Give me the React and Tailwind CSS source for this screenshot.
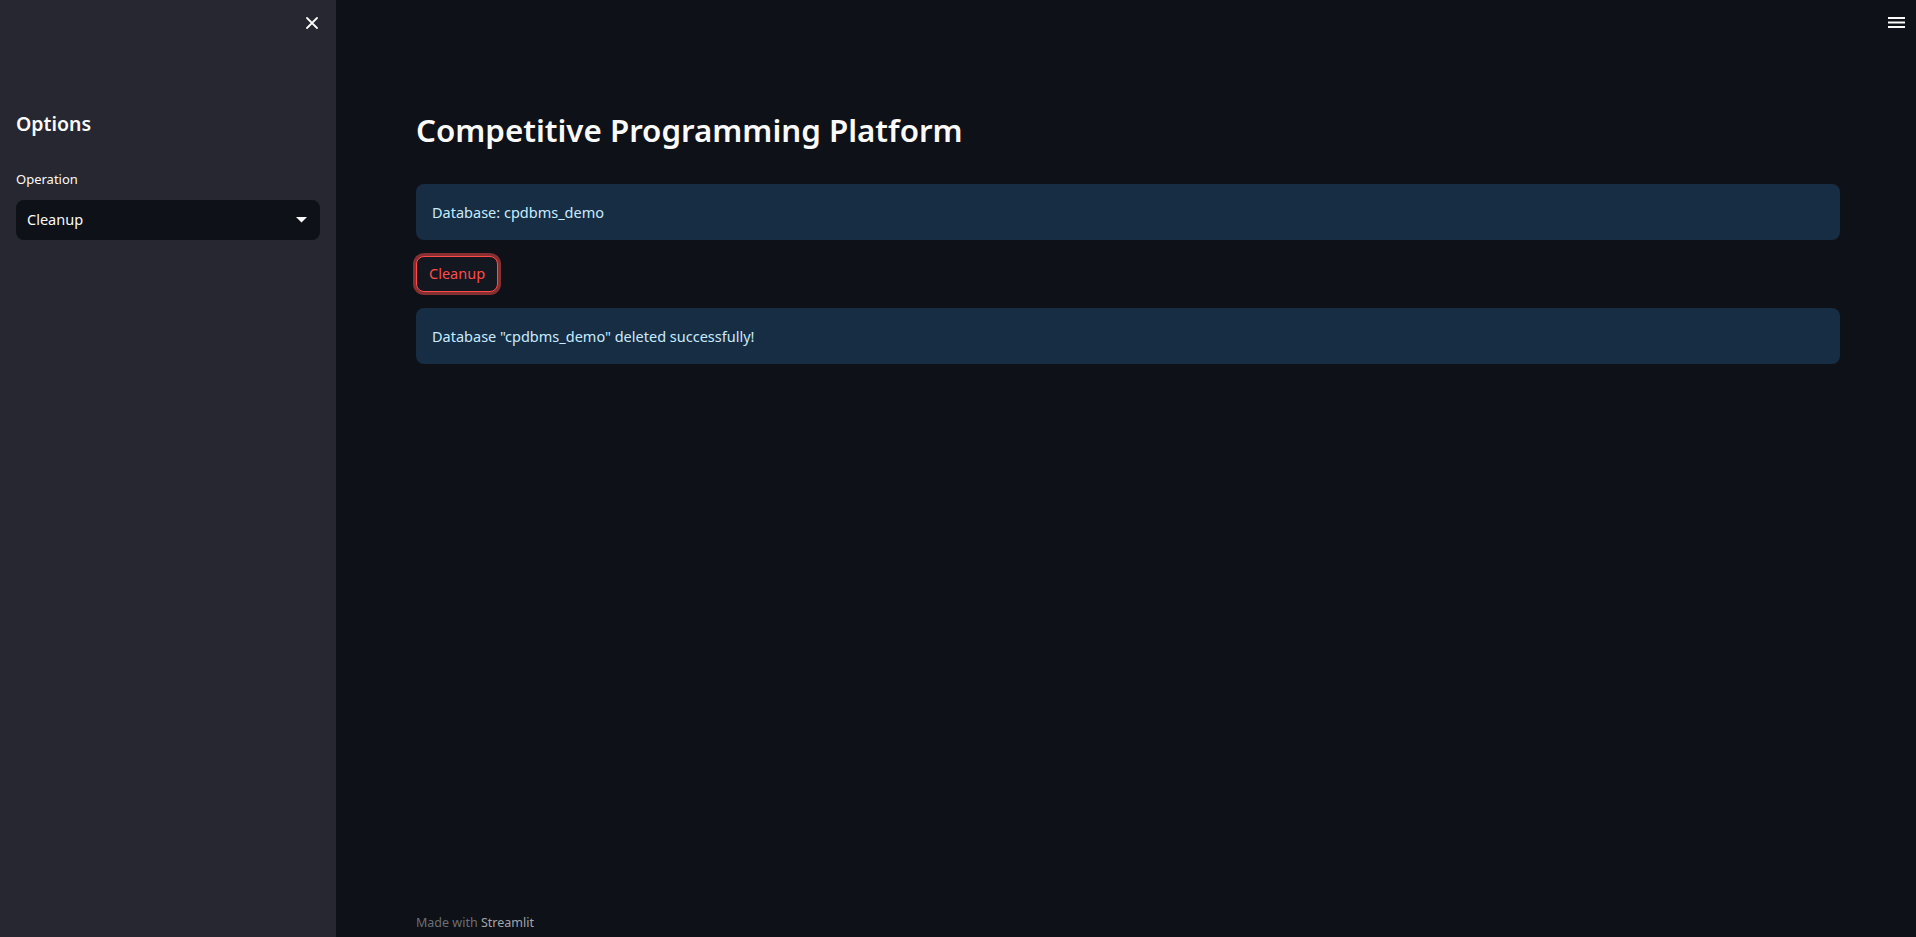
export default function App() {
  return (
    <div className="flex h-screen w-full overflow-hidden bg-[#0e1117] font-['Source_Sans_Pro','Noto_Sans',sans-serif] text-[#fafafa]">
      {/* sidebar */}
      <aside className="flex w-[336px] shrink-0 flex-col bg-[#262730] px-4">
        <div className="flex justify-end pt-[17px] pr-[2px]">
          <svg width="12" height="12" viewBox="0 0 12 12" className="text-[#fafafa]">
            <path d="M1 1 L11 11 M11 1 L1 11" stroke="currentColor" strokeWidth="1.8" strokeLinecap="round" />
          </svg>
        </div>
        <h2 className="mt-[83px] text-[19.5px] font-semibold leading-[24px]">Options</h2>
        <label className="mt-[35px] text-[13px] leading-[16px] text-[#fafafa]">Operation</label>
        <div className="mt-[13px] flex h-10 w-full items-center justify-between rounded-lg bg-[#0e1117] pl-[11px] pr-[13px]">
          <span className="text-[14.5px]">Cleanup</span>
          <svg width="11" height="6" viewBox="0 0 11 6">
            <path d="M0 0 H11 L5.5 5.5 Z" fill="#fafafa" />
          </svg>
        </div>
      </aside>

      {/* main */}
      <main className="flex flex-1 flex-col">
        <header className="flex h-[44px] justify-end pt-[17px] pr-[11px]">
          <svg width="17" height="11" viewBox="0 0 17 11">
            <path d="M0 1 H17 M0 5.5 H17 M0 10 H17" stroke="#fafafa" strokeWidth="1.8" />
          </svg>
        </header>

        <div className="flex flex-col pl-20 pr-[76px] pt-[67px]">
          <h1 className="text-[31.3px] font-semibold leading-[38px]">Competitive Programming Platform</h1>

          <div className="mt-[35px] flex flex-col items-start gap-4">
            <div className="flex h-14 w-full items-center rounded-lg bg-[#172d43] px-4 pt-[2px] text-[14.5px] text-[#c7ebff]">
              Database: cpdbms_demo
            </div>
            <button className="h-9 rounded-lg border border-[#ff4b4b] bg-[#13171f] px-3 text-[14.5px] text-[#ff4b4b] shadow-[0_0_0_3px_rgba(255,75,75,0.5)]">
              Cleanup
            </button>
            <div className="flex h-14 w-full items-center rounded-lg bg-[#172d43] px-4 pt-[2px] text-[14.5px] text-[#c7ebff]">
              Database "cpdbms_demo" deleted successfully!
            </div>
          </div>
        </div>

        <footer className="mt-auto pb-[4px] pl-20 text-[12.5px] leading-5 text-[#6d6f75]">
          Made with <span className="text-[#a3a5aa]">Streamlit</span>
        </footer>
      </main>
    </div>
  );
}
